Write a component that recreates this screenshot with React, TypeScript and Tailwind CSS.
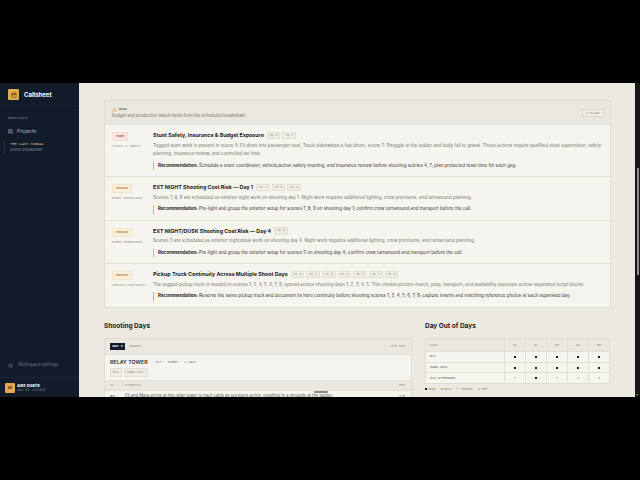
import { AlertTriangle, Clapperboard, LayoutGrid, SlidersHorizontal } from "lucide-react";

const MONO = "font-['Liberation_Mono',monospace]";

type Risk = {
  level: string;
  area: string;
  title: string;
  scenes: string[];
  body: string[];
  rec: string;
  high?: boolean;
};

const RISKS: Risk[] = [
  {
    level: "HIGH",
    high: true,
    area: "STUNTS & SAFETY",
    title: "Stunt Safety, Insurance & Budget Exposure",
    scenes: ["4", "7"],
    body: [
      "Tagged stunt work is present in scene 4: Eli dives into passenger seat, Truck sideswipes a fuel drum; scene 7: Struggle at the ladder and body fall to gravel. These actions require qualified stunt supervision, safety",
      "planning, insurance review, and controlled set time.",
    ],
    rec: "Schedule a stunt coordinator, vehicle/action safety meeting, and insurance review before shooting scenes 4, 7; plan protected reset time for each gag.",
  },
  {
    level: "MEDIUM",
    area: "NIGHT OPERATIONS",
    title: "EXT NIGHT Shooting Cost Risk — Day 1",
    scenes: ["7", "8", "9"],
    body: ["Scenes 7, 8, 9 are scheduled as exterior night work on shooting day 1. Night work requires additional lighting, crew premiums, and turnaround planning."],
    rec: "Pre-light and group the exterior setup for scenes 7, 8, 9 on shooting day 1; confirm crew turnaround and transport before the call.",
  },
  {
    level: "MEDIUM",
    area: "NIGHT OPERATIONS",
    title: "EXT NIGHT/DUSK Shooting Cost Risk — Day 4",
    scenes: ["5"],
    body: ["Scenes 5 are scheduled as exterior night/dusk work on shooting day 4. Night work requires additional lighting, crew premiums, and turnaround planning."],
    rec: "Pre-light and group the exterior setup for scenes 5 on shooting day 4; confirm crew turnaround and transport before the call.",
  },
  {
    level: "MEDIUM",
    area: "VEHICLE CONTINUITY",
    title: "Pickup Truck Continuity Across Multiple Shoot Days",
    scenes: ["1", "2", "4", "5", "6", "7", "9"],
    body: ["The tagged pickup truck is needed in scenes 1, 2, 4, 5, 6, 7, 9, spread across shooting days 1, 2, 3, 4, 5. This creates picture-match, prep, transport, and availability exposure across separated script blocks."],
    rec: "Reserve the same pickup truck and document its hero continuity before shooting scenes 1, 2, 4, 5, 6, 7, 9; capture inserts and matching reference photos at each separated day.",
  },
];

const DOOD = [
  { name: "ELI", marks: ["■", "■", "■", "■", "■"] },
  { name: "MARA VOSS", marks: ["■", "■", "■", "■", "■"] },
  { name: "OLD ATTENDANT", marks: ["o", "■", "o", "o", "o"] },
];

function RiskRow({ risk }: { risk: Risk }) {
  return (
    <div className="flex border-t border-[#e3dfd6] bg-[#f6f4ef] px-[7px] pt-[6px] pb-[6px]">
      <div className="w-[41px] shrink-0 pt-[1px]">
        <div
          className={`${MONO} w-fit border px-[3px] py-[1px] text-[3.3px] leading-[5px] font-bold ${
            risk.high ? "border-[#f3dcd8] bg-[#f9e7e4] text-[#c2574d]" : "border-[#f1e6cb] bg-[#f8efdb] text-[#b98a3a]"
          }`}
        >
          {risk.level}
        </div>
        <div className={`${MONO} mt-[3px] text-[3.2px] leading-[5px] whitespace-nowrap text-[#8d8a82]`}>{risk.area}</div>
      </div>
      <div className="min-w-0 flex-1">
        <div className="flex h-[9px] items-center gap-[2px]">
          <span className="mr-[1px] font-['Inter',sans-serif] text-[5.3px] leading-[9px] font-bold whitespace-nowrap text-[#1b1b1b]">{risk.title}</span>
          {risk.scenes.map((s) => (
            <span key={s} className={`${MONO} border border-[#e3dfd6] bg-[#efece5] px-[2px] text-[3.2px] leading-[5.5px] whitespace-nowrap text-[#8d8a82]`}>
              SC {s}
            </span>
          ))}
        </div>
        <div className="mt-[1.5px] text-[4.48px] leading-[8.5px] whitespace-nowrap text-[#77746d]">
          {risk.body.map((line) => (
            <div key={line}>{line}</div>
          ))}
        </div>
        <div className="mt-[3px] border-l border-[#d9b45b] pl-[4px] text-[4.48px] leading-[8.5px] whitespace-nowrap text-[#37352f]">
          <span className="font-bold text-[#1b1b1b]">Recommendation:</span> {risk.rec}
        </div>
      </div>
    </div>
  );
}

function Sidebar() {
  return (
    <aside className="flex w-[79px] shrink-0 flex-col bg-[#121b2a]">
      <div className="flex h-[24px] items-center gap-[5px] border-b border-[#172130] pl-[8px]">
        <div className="flex h-[11px] w-[11px] items-center justify-center rounded-[1px] bg-[#e0ab4c]">
          <Clapperboard size={6} className="text-[#4a3410]" />
        </div>
        <span className="text-[6px] leading-[8px] font-bold text-white">Callsheet</span>
      </div>
      <div className={`${MONO} mt-[9px] pl-[8px] text-[3.3px] leading-[5px] tracking-[0.2px] text-[#7d8796]`}>WORKSPACE</div>
      <div className="mt-[6px] flex items-center gap-[4px] pl-[8px] text-[5px] leading-[8px] text-[#a9b2bf]">
        <LayoutGrid size={5} />
        Projects
      </div>
      <div className="mt-[6px] ml-[4px] border-l border-[#263244] pl-[5px]">
        <div className={`${MONO} text-[3.8px] leading-[6px] whitespace-nowrap text-[#e0c48a]`}>THE LAST SIGNAL</div>
        <div className="text-[3.8px] leading-[6px] text-[#7d8796]">Scene breakdown</div>
      </div>
      <div className="mt-auto flex items-center gap-[5px] pb-[9px] pl-[8px] text-[4.3px] leading-[6px] text-[#6f7a8a]">
        <SlidersHorizontal size={5} />
        Workspace settings
      </div>
      <div className="flex h-[20px] items-center gap-[2px] border-t border-[#1d2737] pl-[5px]">
        <div className="flex h-[10px] w-[10px] items-center justify-center rounded-[1px] bg-[#e0ab4c] text-[3.2px] leading-[4px] font-bold text-[#4a3410]">AD</div>
        <div>
          <div className="text-[4px] leading-[5px] font-bold text-white">Alex Duarte</div>
          <div className="text-[3.5px] leading-[5px] text-[#7d8796]">Jan. All · v0.5.6.8</div>
        </div>
      </div>
    </aside>
  );
}

function ShootingDays() {
  return (
    <div className="w-[308px] shrink-0">
      <h2 className="font-['Inter',sans-serif] text-[6.5px] leading-[9px] font-bold text-[#1b1b1b]">Shooting Days</h2>
      <div className="mt-[7.5px] border border-[#e0dcd3] bg-[#f6f4ef]">
        <div className="flex h-[16px] items-center border-b border-[#e3dfd6] bg-[#eae7df] pr-[6px] pl-[5px]">
          <span className={`${MONO} bg-[#121b2a] px-[2.5px] text-[3.4px] leading-[7px] font-bold text-white`}>DAY 3</span>
          <span className={`${MONO} ml-[4px] text-[3.3px] leading-[7px] text-[#8d8a82]`}>MONDAY</span>
          <span className={`${MONO} ml-auto text-[3.3px] leading-[7px] text-[#8d8a82]`}>6/8 PGS</span>
        </div>
        <div className="h-[25px] px-[5px] pt-[3px]">
          <div className="flex h-[9px] items-center gap-[4px]">
            <span className="text-[5.3px] leading-[9px] font-semibold text-[#2d2c29]">RELAY TOWER</span>
            <span className={`${MONO} text-[3.4px] leading-[9px] whitespace-pre text-[#6f6c65]`}>· EXT · NIGHT · 2 CAST</span>
          </div>
          <div className={`${MONO} mt-[1px] flex gap-[2px] text-[3.3px] leading-[6.5px] text-[#8d8a82]`}>
            <span className="border border-[#e3dfd6] bg-[#efece5] px-[2px]">ELI</span>
            <span className="border border-[#e3dfd6] bg-[#efece5] px-[2px]">MARA VOSS</span>
          </div>
        </div>
        <div className={`${MONO} flex h-[11px] items-center border-y border-[#e3dfd6] bg-[#eae7df] pr-[6px] pl-[5px] text-[3.3px] leading-[5px] text-[#8d8a82]`}>
          <span className="w-[15px]">SC</span>
          <span>SYNOPSIS</span>
          <span className="ml-auto">PGS</span>
        </div>
        <div className="relative flex h-[10px] items-center pr-[6px] pl-[5px] text-[4.2px] leading-[6px] text-[#5c5a54]">
          <span className={`${MONO} w-[15px] text-[#2d2c29]`}>9T</span>
          <span className="whitespace-nowrap">Eli and Mara arrive at the relay tower to haul cable as pursuers arrive, resulting in a struggle at the ladder.</span>
          <span className={`${MONO} ml-auto text-[3.3px]`}>2/8</span>
          <span className="absolute top-[0px] left-[209px] h-[2px] w-[14px] rounded-full bg-[#8a8a86]" />
        </div>
      </div>
    </div>
  );
}

function DayOutOfDays() {
  const cell = "flex w-[21px] items-center justify-center border-l border-[#e3dfd6]";
  return (
    <div className="w-[185px] shrink-0">
      <h2 className="font-['Inter',sans-serif] text-[6.5px] leading-[9px] font-bold text-[#1b1b1b]">Day Out of Days</h2>
      <div className="mt-[7.5px] border border-[#e0dcd3]">
        <div className={`${MONO} flex h-[12px] bg-[#eae7df] text-[3.3px] leading-[5px] text-[#8d8a82]`}>
          <div className="flex flex-1 items-center pl-[4px]">CAST</div>
          {["D1", "D2", "D3", "D4", "D5"].map((d) => (
            <div key={d} className={cell}>{d}</div>
          ))}
        </div>
        {DOOD.map((row) => (
          <div key={row.name} className={`${MONO} flex h-[10.7px] border-t border-[#e3dfd6] text-[3.3px] leading-[5px]`}>
            <div className="flex flex-1 items-center bg-[#f6f4ef] pl-[4px] text-[#5c5a54]">{row.name}</div>
            {row.marks.map((m, i) => (
              <div key={i} className={`${cell} bg-[#f6f4ef] ${m === "o" ? "text-[#9a978f]" : "text-[#1b1b1b]"}`}>
                {m === "o" ? "o" : <span className="h-[2px] w-[2px] bg-[#1b1b1b]" />}
              </div>
            ))}
          </div>
        ))}
      </div>
      <div className={`${MONO} mt-[2px] flex items-center gap-[5px] text-[3.3px] leading-[6px] text-[#8d8a82]`}>
        <span className="flex items-center gap-[1px]"><span className="h-[2px] w-[2px] bg-[#1b1b1b]" /> WORK</span>
        <span className="flex items-center gap-[1px]"><span className="h-[2px] w-[2px] bg-[#d9b45b]" /> HOLD</span>
        <span>T TRAVEL</span>
        <span>o OFF</span>
      </div>
    </div>
  );
}

export default function App() {
  return (
    <div className="flex h-[480px] w-[640px] flex-col overflow-hidden bg-black font-['Inter',sans-serif]">
      <div className="h-[83px] shrink-0" />
      <div className="flex h-[314px] shrink-0">
        <Sidebar />
        <main className="w-[556px] shrink-0 overflow-hidden bg-[#ece9e2] pt-[17px] pl-[25px]">
          <div className="w-[507px] border border-[#e0dcd3]">
            <div className="flex h-[23px] items-center justify-between bg-[#eae7df] pr-[6px] pl-[7px]">
              <div>
                <div className={`${MONO} flex items-center gap-[2px] text-[3.3px] leading-[5px] font-bold text-[#6f6c65]`}>
                  <AlertTriangle size={5} className="text-[#d9a441]" />
                  RISK
                </div>
                <div className="mt-[1px] text-[4.2px] leading-[6px] text-[#77746d]">Budget and production watch items from the scheduled breakdown.</div>
              </div>
              <span className={`${MONO} border border-[#dcd8cf] bg-[#efece5] px-[3px] text-[3.3px] leading-[6px] text-[#8d8a82]`}>4 FLAGS</span>
            </div>
            {RISKS.map((r) => (
              <RiskRow key={r.title} risk={r} />
            ))}
          </div>
          <div className="mt-[14px] flex gap-[13px]">
            <ShootingDays />
            <DayOutOfDays />
          </div>
        </main>
        <div className="relative w-[5px] shrink-0 bg-[#151515]">
          <span className="absolute top-[85px] left-[2px] h-[107px] w-[2px] bg-[#8f8f8f]" />
          <span className="absolute bottom-[1px] left-[1px] border-x-[1.5px] border-t-[2px] border-x-transparent border-t-[#8f8f8f]" />
        </div>
      </div>
    </div>
  );
}
